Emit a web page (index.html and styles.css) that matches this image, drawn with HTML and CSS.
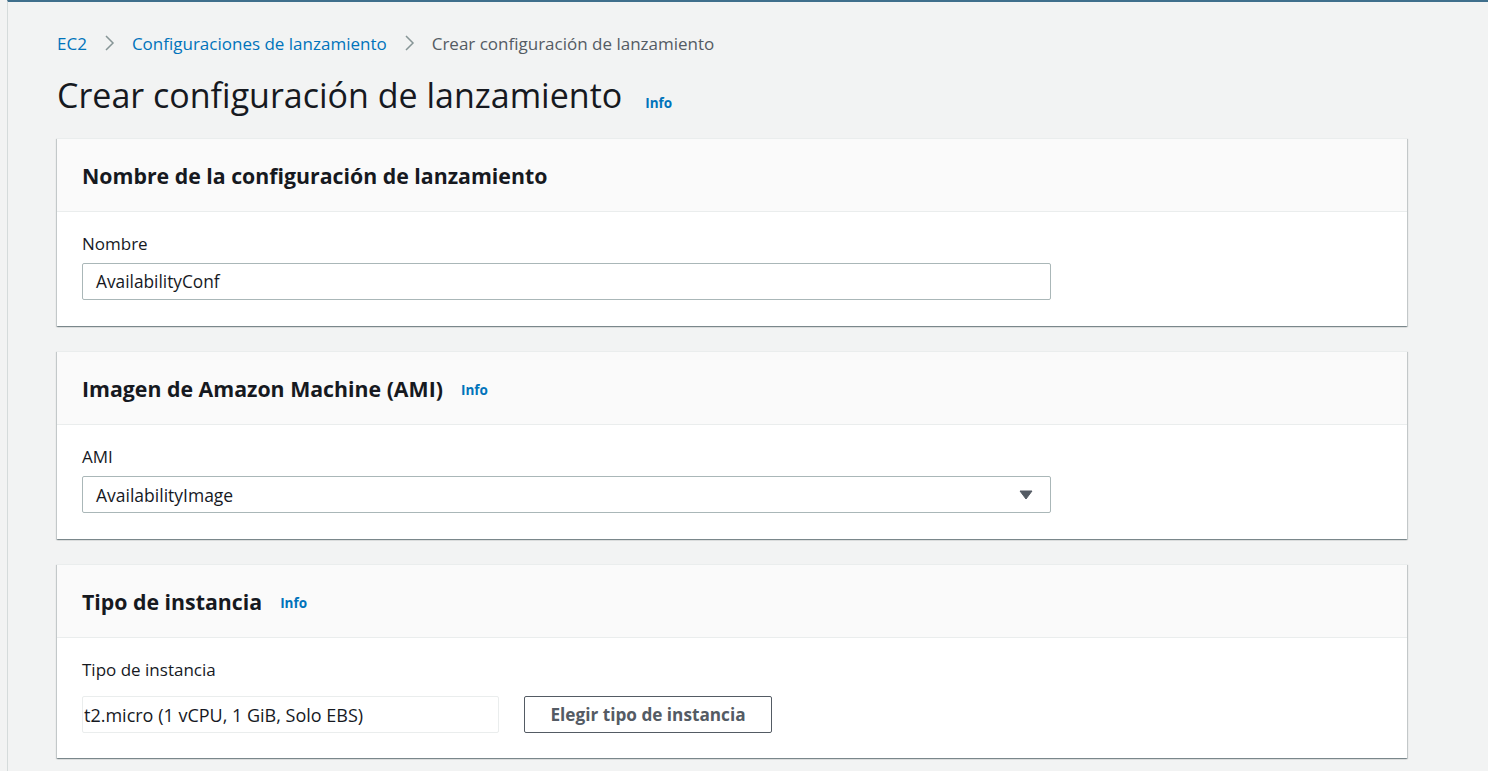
FILE: index.html
```html
<!DOCTYPE html>
<html lang="es">
<head>
<meta charset="utf-8">
<title>Crear configuración de lanzamiento</title>
<link rel="stylesheet" href="styles.css">
</head>
<body>
<div class="frame">
  <main class="content">
    <nav class="breadcrumbs">
      <a class="crumb link" href="#">EC2</a>
      <svg class="chev" width="12" height="18" viewBox="0 0 12 18"><path d="M3 2l7 7-7 7" fill="none" stroke="#879596" stroke-width="1.5"/></svg>
      <a class="crumb link" href="#">Configuraciones de lanzamiento</a>
      <svg class="chev" width="12" height="18" viewBox="0 0 12 18"><path d="M3 2l7 7-7 7" fill="none" stroke="#879596" stroke-width="1.5"/></svg>
      <span class="crumb current">Crear configuración de lanzamiento</span>
    </nav>
    <div class="page-title">
      <h1>Crear configuración de lanzamiento</h1>
      <a class="info" href="#">Info</a>
    </div>

    <section class="card">
      <header class="card-head"><h2>Nombre de la configuración de lanzamiento</h2></header>
      <div class="card-body">
        <label class="label">Nombre</label>
        <div class="input wide">AvailabilityConf</div>
      </div>
    </section>

    <section class="card">
      <header class="card-head"><h2>Imagen de Amazon Machine (AMI)</h2><a class="info" href="#">Info</a></header>
      <div class="card-body">
        <label class="label">AMI</label>
        <div class="input wide select">
          <span>AvailabilityImage</span>
          <svg class="caret" width="14" height="10" viewBox="0 0 14 10"><path d="M1 1h12L7 9z" fill="#545b64" stroke="#545b64" stroke-width="1" stroke-linejoin="round"/></svg>
        </div>
      </div>
    </section>

    <section class="card">
      <header class="card-head"><h2>Tipo de instancia</h2><a class="info" href="#">Info</a></header>
      <div class="card-body last">
        <label class="label spaced">Tipo de instancia</label>
        <div class="row">
          <div class="input readonly">t2.micro (1 vCPU, 1 GiB, Solo EBS)</div>
          <button class="btn">Elegir tipo de instancia</button>
        </div>
      </div>
    </section>
  </main>
</div>
</body>
</html>
```
FILE: styles.css
```css
* { box-sizing: border-box; }
html, body { margin: 0; padding: 0; }
body {
  background: #f2f3f3;
  font-family: "Open Sans", "Noto Sans", sans-serif;
  color: #16191f;
  height: 771px;
  overflow: hidden;
}
.frame {
  border-top: 2px solid #3f6f8c;
  border-left: 1px solid #d5dbdb;
  margin-left: 7px;
  min-height: 771px;
}
.content {
  padding: 28px 81px 0 49px;
}
.breadcrumbs {
  display: flex;
  align-items: center;
  height: 26px;
  font-size: 17px;
}
.crumb { text-decoration: none; }
.link { color: #0073bb; }
.current { color: #545b64; }
.chev { margin: 0 17px 0 16px; }
.page-title {
  display: flex;
  align-items: baseline;
  margin-top: 13px;
  margin-bottom: 17px;
  height: 52px;
}
h1 {
  margin: 0;
  font-size: 34px;
  font-weight: 400;
  line-height: 52px;
}
.info {
  color: #0073bb;
  font-size: 13.5px;
  font-weight: 700;
  text-decoration: none;
}
.page-title .info { margin-left: 23px; }
.card {
  background: #fff;
  margin-bottom: 25px;
  box-shadow: 0 1px 1px 0 rgba(0,28,36,.3), 1px 1px 1px 0 rgba(0,28,36,.15), -1px 1px 1px 0 rgba(0,28,36,.15);
  border-top: 1px solid #eaeded;
}
.card-head {
  background: #fafafa;
  border-bottom: 1px solid #eaeded;
  height: 73px;
  padding: 0 25px;
  display: flex;
  align-items: center;
}
h2 {
  margin: 0;
  font-size: 21.3px;
  font-weight: 700;
}
.card-head .info { margin-left: 18px; margin-top: 4px; }
.card-body {
  padding: 21px 25px 26px;
}
.card-body.last { padding-bottom: 25px; }
.label {
  display: block;
  font-size: 17px;
  line-height: 22px;
  margin-bottom: 8px;
}
.label.spaced { margin-bottom: 15px; }
.input {
  height: 37px;
  border: 1px solid #aab7b8;
  border-radius: 2px;
  padding: 0 13px;
  display: flex;
  align-items: center;
  font-size: 17.3px;
  background: #fff;
}
.wide { width: 969px; }
.select { justify-content: space-between; padding-right: 17px; font-size: 17.5px; }
.readonly {
  width: 417px;
  border-color: #eaeded;
  padding: 0 0 0 1px;
  font-size: 18px;
}
.row {
  display: flex;
  gap: 25px;
}
.btn {
  width: 248px;
  height: 37px;
  border: 1px solid #545b64;
  border-radius: 2px;
  background: #fff;
  color: #545b64;
  font-family: inherit;
  font-size: 17.2px;
  font-weight: 700;
}
```
